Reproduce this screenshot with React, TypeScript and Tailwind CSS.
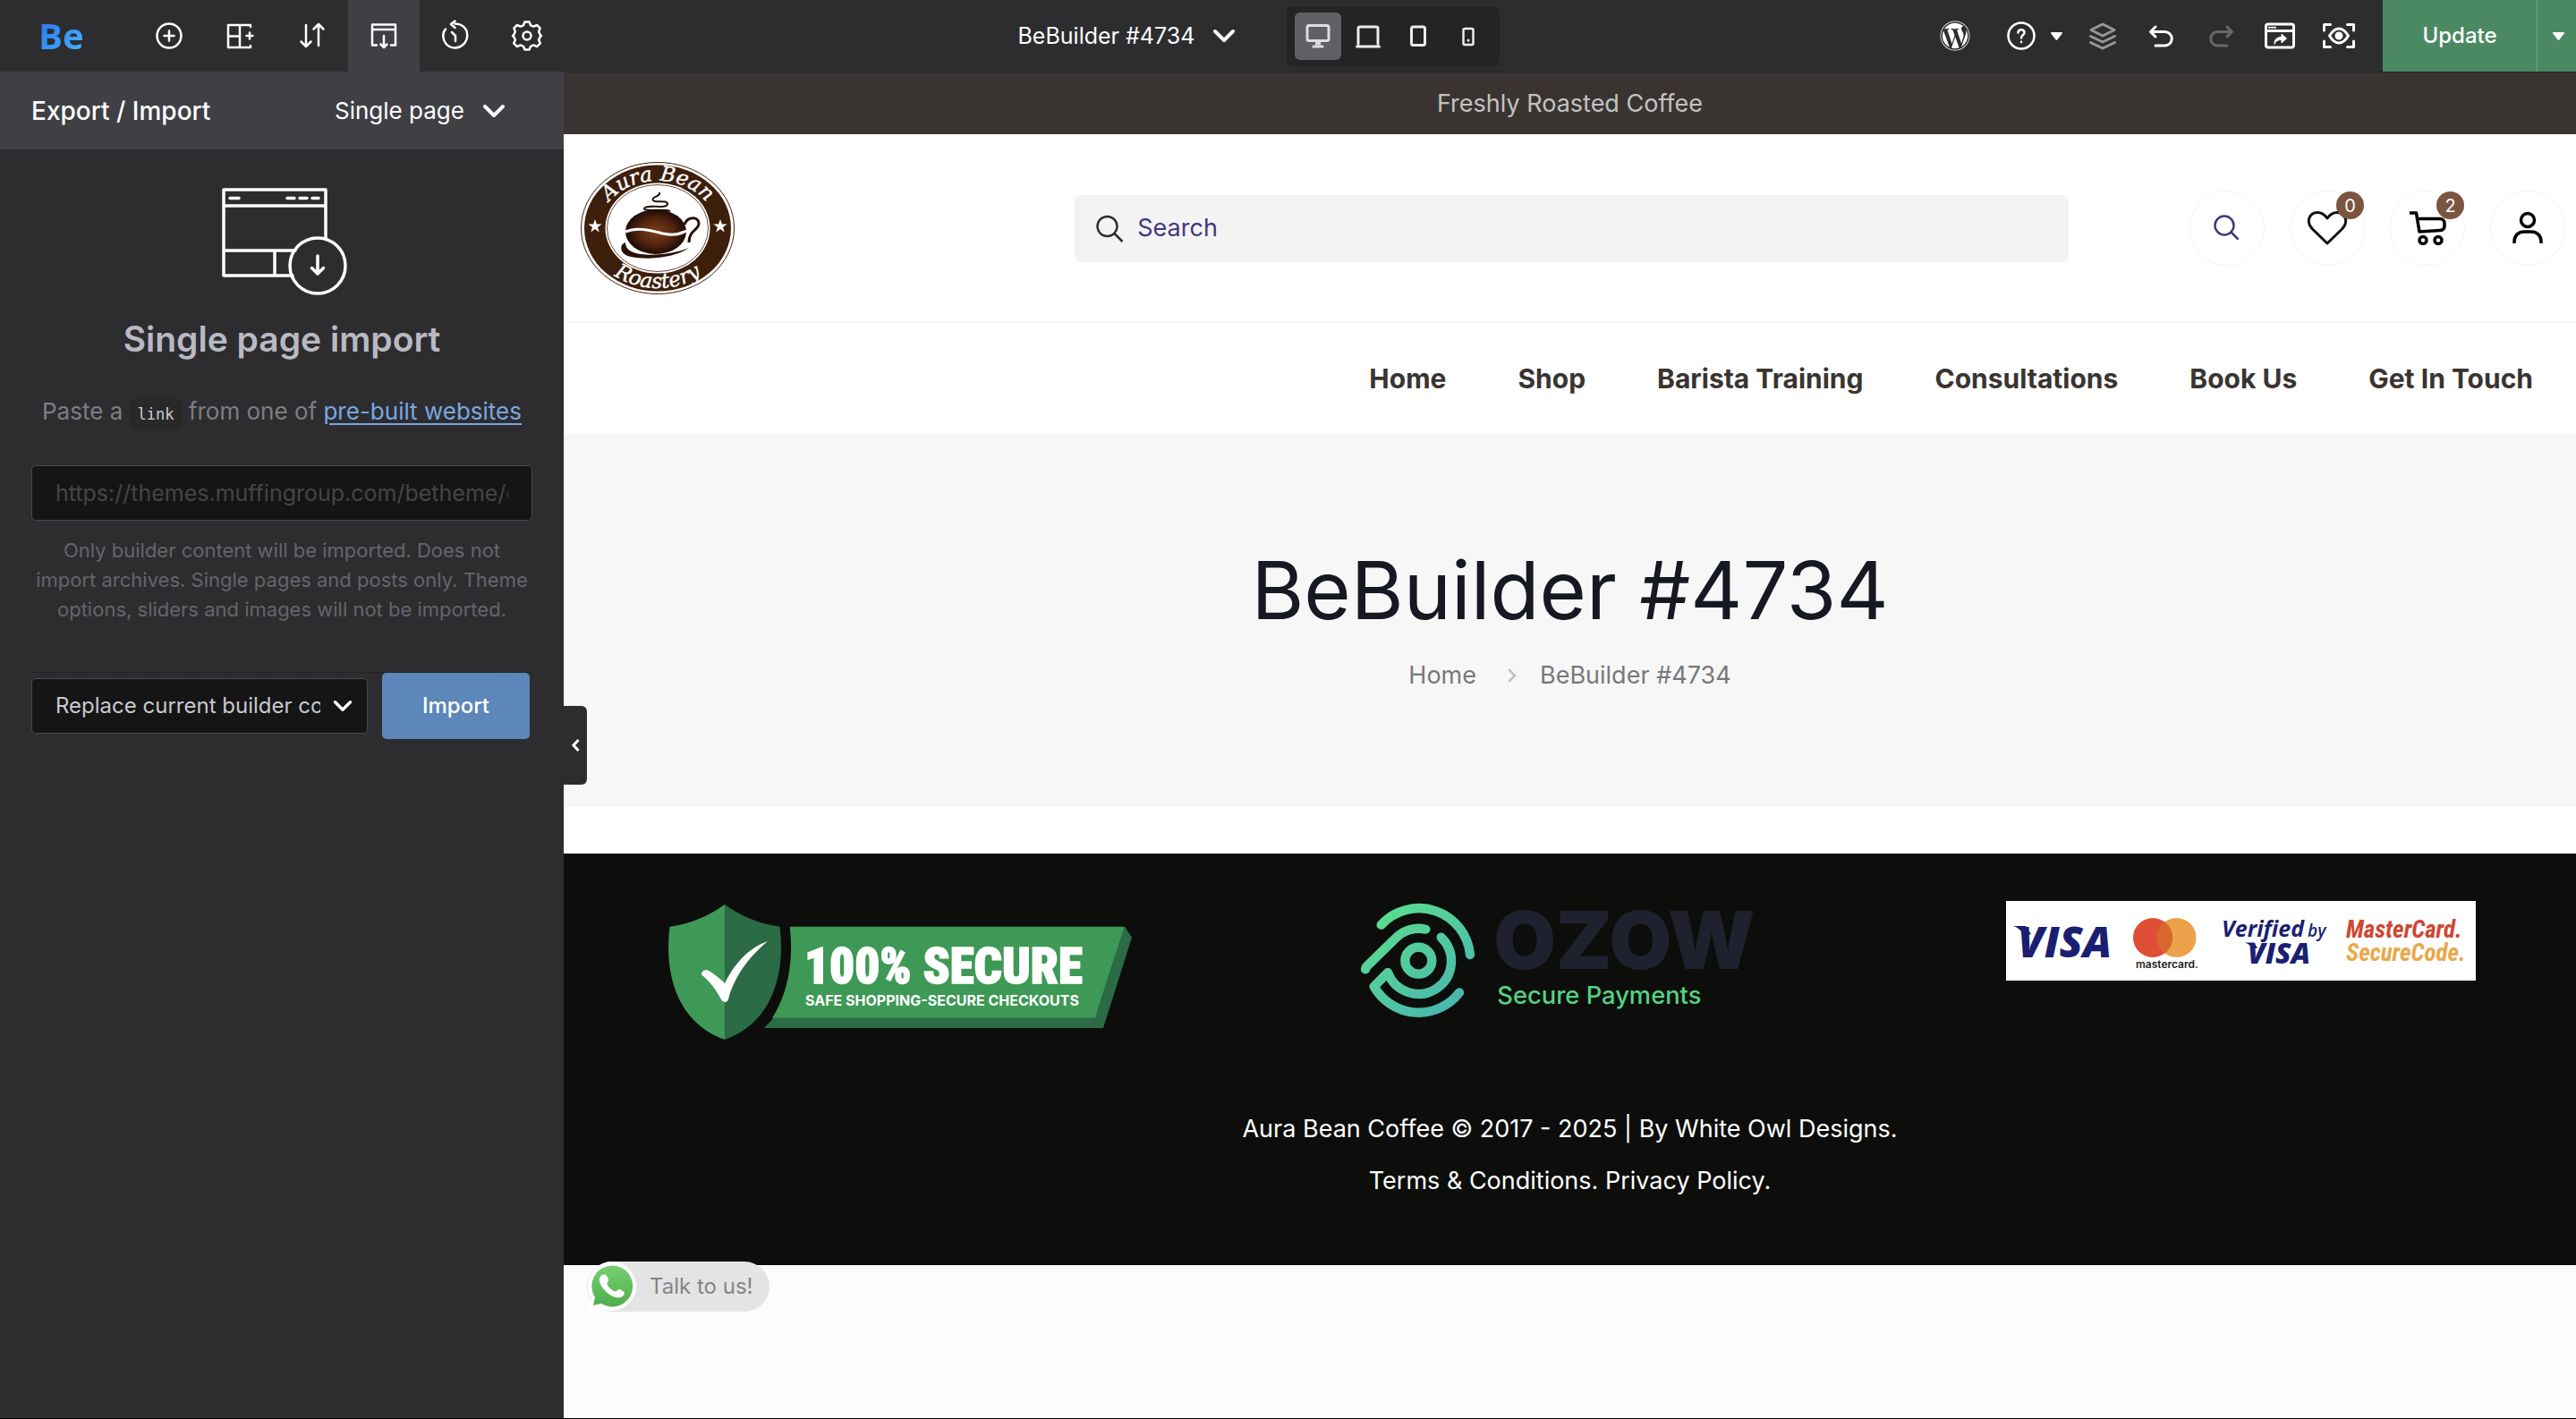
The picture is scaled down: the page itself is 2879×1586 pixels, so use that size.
import type { ReactNode } from 'react';
import { FaWordpress } from 'react-icons/fa';

const Chevron = ({ className = '' }: { className?: string }) => (
  <svg className={className} viewBox="0 0 26 16" fill="none" stroke="currentColor" strokeWidth="4" strokeLinecap="round" strokeLinejoin="round">
    <path d="M3 3l10 10L23 3" />
  </svg>
);

const Caret = () => (
  <svg className="w-[13px] h-[9px]" viewBox="0 0 13 9" fill="currentColor">
    <path d="M1 0h11c1 0 1.300.8.8 1.500L7.500 8.300c-.5.700-1.500.7-2 0L.2 1.500C-.3.800 0 0 1 0z" />
  </svg>
);

// 36px outlined icon used in the builder toolbar
const Icon = ({ children, width = 2.5 }: { children: ReactNode; width?: number }) => (
  <svg className="w-9 h-9" viewBox="0 0 36 36" fill="none" stroke="currentColor" strokeWidth={width} strokeLinecap="round" strokeLinejoin="round">
    {children}
  </svg>
);

const tools = [
  {
    label: 'Add element',
    icon: (
      <Icon>
        <circle cx="18" cy="18" r="13.500" />
        <path d="M18 12.500v11M12.500 18h11" />
      </Icon>
    ),
  },
  {
    label: 'Pre-built sections',
    icon: (
      <Icon>
        <path d="M29 6H4v25h25M17 6v25M4 18.500h13M29 6v2M29 29v2M28 14.500v7M24.500 18h7" />
      </Icon>
    ),
  },
  {
    label: 'Navigator order',
    icon: (
      <Icon>
        <path d="M11 6v24M5.500 24.500L11 30l5.500-5.500M25 29V5M19.500 10.500L25 5l5.500 5.500" />
      </Icon>
    ),
  },
  {
    label: 'Export / Import',
    active: true,
    icon: (
      <Icon>
        <path d="M10 28.500H5V5.500h26v23h-5M5 11h26M18 18v13M14.500 27.500L18 31l3.500-3.500" />
      </Icon>
    ),
  },
  {
    label: 'History',
    icon: (
      <Icon>
        <path d="M7 10.500C3 15 3.500 22 7.500 27c5 5.800 14 5.800 19.500.5 6-6 5.500-16-1-20.500-2.500-1.800-5-2.500-8.500-2.500M17.500 1.500L13 5l4.500 4M14 14l4 4v6" />
      </Icon>
    ),
  },
  {
    label: 'Settings',
    icon: (
      <Icon>
        <circle cx="18" cy="18" r="4.500" />
        <path d="M15.400 2.500h5.200l1.400 3.800 3.400 1.400 3.700-1.700 3.600 3.600-1.600 3.700 1.400 3.300 1.500 1.400-1.500 1.400-1.400 3.400 1.700 3.600-3.700 3.700-3.700-1.700-3.400 1.400-1.400 3.700h-5.200L14 29.800l-3.400-1.400-3.700 1.700-3.700-3.700 1.700-3.600-1.400-3.400L2 18l1.500-1.400 1.400-3.300-1.600-3.700L6.900 6l3.700 1.700L14 6.300z" />
      </Icon>
    ),
  },
];

const devices = [
  {
    label: 'Desktop',
    active: true,
    icon: (
      <Icon width={3}>
        <rect x="6" y="6.500" width="24" height="17" rx="2" />
        <path d="M13 30h10" />
        <path d="M18 24.500v4" strokeWidth="6" strokeLinecap="butt" />
      </Icon>
    ),
  },
  {
    label: 'Laptop',
    icon: (
      <Icon width={3}>
        <path d="M7 27V9.500C7 8.500 8 8 9 8h18c1 0 2 .5 2 1.500V27M5.500 30h25" />
      </Icon>
    ),
  },
  {
    label: 'Tablet',
    icon: (
      <Icon width={3}>
        <rect x="10.500" y="8" width="15" height="20.500" rx="2" />
      </Icon>
    ),
  },
  {
    label: 'Mobile',
    icon: (
      <Icon width={2.5}>
        <rect x="12.500" y="10" width="11" height="18" rx="1.500" />
        <circle cx="18" cy="23" r=".8" fill="currentColor" strokeWidth="1.500" />
      </Icon>
    ),
  },
];

const actions = [
  {
    label: 'Global sections',
    color: 'text-[#98989a]',
    icon: (
      <Icon width={3}>
        <path d="M18 5l13 6.500L18 18 5 11.500zM4.500 18.500L18 25l13.500-6.500M4.500 25.500L18 32l13.500-6.500" />
      </Icon>
    ),
  },
  {
    label: 'Undo',
    color: 'text-white',
    icon: (
      <Icon width={3}>
        <path d="M11 8l-5.500 5.500L11 19M6 13.500h15.500a7.500 7.500 0 0 1 0 15.500H11" />
      </Icon>
    ),
  },
  {
    label: 'Redo',
    color: 'text-[#69696b]',
    icon: (
      <Icon width={3}>
        <path d="M25 8l5.500 5.500L25 19M30 13.500H14.500a7.500 7.500 0 0 0 0 15.500H25" />
      </Icon>
    ),
  },
  {
    label: 'Preview in new tab',
    color: 'text-white',
    icon: (
      <Icon width={3}>
        <rect x="2.500" y="5" width="31" height="26" rx="2.500" />
        <path d="M3 12.500h30" />
        <path d="M6 8.700h1M9 8.700h1M12 8.700h1" strokeWidth="2" />
        <path d="M12 27c-.5-5 3-7.500 8-7.500v-3.500l5.500 5-5.500 5v-3.500c-4 0-6.500 1-8 4.500z" fill="currentColor" strokeWidth="1" />
      </Icon>
    ),
  },
  {
    label: 'Live preview',
    color: 'text-white',
    icon: (
      <Icon width={3}>
        <path d="M1.500 12V5.500h7M27.500 5.500h7V12M34.500 24v6.500h-7M8.500 30.500h-7V24" />
        <path d="M7.500 18c3-5 6.500-8 10.500-8s7.500 3 10.500 8c-3 5-6.500 8-10.500 8s-7.500-3-10.500-8z" />
        <circle cx="18" cy="18" r="3" fill="currentColor" />
      </Icon>
    ),
  },
];

const TopBar = () => (
  <header className="flex h-20 shrink-0 items-stretch justify-between bg-[#2d2d2f] text-white">
    <div className="flex w-[670px] shrink-0 items-stretch">
      <a href="#" aria-label="Be" className="flex w-[149px] items-center pl-[43px]">
        <span className="bg-gradient-to-br from-[#2a6ff0] to-[#4cb8ff] bg-clip-text font-['Open_Sans'] text-[40px] leading-[48px] font-bold text-transparent">Be</span>
      </a>
      {tools.map((tool) => (
        <button key={tool.label} aria-label={tool.label} className={tool.active ? 'flex w-20 items-center justify-center bg-[#403f44]' : 'flex w-20 items-center justify-center hover:bg-[#38383b]'}>
          {tool.icon}
        </button>
      ))}
    </div>

    <div className="flex items-center gap-[57px]">
      <div className="relative flex items-center">
        <select aria-label="Edited page" className="w-[243px] appearance-none bg-transparent text-[25px] leading-10 text-white">
          <option>BeBuilder #4734</option>
        </select>
        <Chevron className="pointer-events-none absolute right-0 h-4 w-[26px]" />
      </div>
      <div className="flex gap-1 rounded-md bg-[#242426] px-[9px] py-[7px]">
        {devices.map((device) => (
          <button key={device.label} aria-label={device.label} className={device.active ? 'flex h-[53px] w-[52px] items-center justify-center rounded-md bg-[#605f64] text-[#dddce1]' : 'flex h-[53px] w-[52px] items-center justify-center rounded-md text-[#ececef]'}>
            {device.icon}
          </button>
        ))}
      </div>
    </div>

    <div className="flex items-stretch">
      <button aria-label="WordPress" className="flex w-[84px] items-center justify-center">
        <FaWordpress className="h-[34px] w-[34px]" />
      </button>
      <button aria-label="Help" className="flex w-[90px] items-center gap-[15px] pl-[14px]">
        <Icon>
          <circle cx="18" cy="18" r="14.500" />
          <path d="M14.500 14.500c0-4.500 7-4.500 7 0 0 2.500-3.500 2.500-3.500 6M18 24.800v.2" />
        </Icon>
        <Caret />
      </button>
      {actions.map((action) => (
        <button key={action.label} aria-label={action.label} className={`flex w-[66px] items-center justify-center ${action.color}`}>
          {action.icon}
        </button>
      ))}
      <button className="ml-4 w-[172px] bg-[#4b8963] text-[24px] font-medium">Update</button>
      <button aria-label="More update options" className="flex w-[44px] items-center justify-center border-l border-[#6ea583] bg-[#4b8963] pl-1">
        <Caret />
      </button>
    </div>
  </header>
);

const Sidebar = () => (
  <aside className="relative w-[630px] shrink-0 bg-[#2d2d2f]">
    <div className="flex h-[88px] items-center justify-between border-b border-[#252527] bg-[#403f44] pr-[65px] pl-[35px] text-white">
      <h2 className="text-[28px] font-medium">Export / Import</h2>
      <div className="relative flex items-center">
        <select aria-label="Import type" className="w-[191px] appearance-none bg-transparent text-[26px] leading-10">
          <option>Single page</option>
        </select>
        <Chevron className="pointer-events-none absolute right-0 h-4 w-[26px]" />
      </div>
    </div>

    <div className="px-[35px] pt-[42px] text-center">
      <svg className="mx-auto h-[121px] w-[146px]" viewBox="-6 0 146 121" fill="none" stroke="#fff" strokeWidth="3.500" strokeLinecap="round" strokeLinejoin="round">
        <path d="M116 56V2H2v96h77M2 20h114M2 70h80M59 70v28" />
        <path d="M9 11.500h10M73 11.500h8M87 11.500h8M101 11.500h7" />
        <circle cx="107" cy="87" r="31" />
        <path d="M107 76v20M100.500 89.500L107 96l6.500-6.500" />
      </svg>
      <h3 className="mt-[18px] text-[39px] leading-[60px] font-semibold text-[#bab9c3]">Single page import</h3>
      <p className="mt-[31px] h-10 text-[26px] leading-10 whitespace-nowrap text-[#7f7d85]">
        Paste a <code className="rounded-md bg-[#29292a] px-[9px] py-2 font-['DejaVu_Sans_Mono',monospace] text-[17px] leading-none text-[#d0cfd6]">link</code> from one of{' '}
        <a href="#" className="text-[#7ba7e0] underline underline-offset-4">pre-built websites</a>
      </p>
      <input
        aria-label="Page link"
        placeholder="https://themes.muffingroup.com/betheme/demo"
        className="mt-10 block h-[62px] w-full rounded-[5px] border border-[#48484c] bg-[#151515] px-[26px] text-[25px] placeholder:text-[#454547]"
      />
      <p className="mt-[17px] text-[22px] leading-[33px] text-[#66646c]">
        Only builder content will be imported. Does not
        <br />
        import archives. Single pages and posts only. Theme
        <br />
        options, sliders and images will not be imported.
      </p>
      <div className="mt-[53px] flex items-center gap-4 border-t border-dashed border-[#1e1e20]">
        <div className="relative flex w-[376px] items-center">
          <select aria-label="Import mode" className="h-[62px] w-full appearance-none rounded-[5px] border border-[#48484c] bg-[#151515] pr-[52px] pl-[26px] text-[24px] text-[#c9c8d0]">
            <option>Replace current builder content</option>
          </select>
          <Chevron className="pointer-events-none absolute right-[17px] h-[14px] w-[22px] text-white" />
        </div>
        <button className="h-[74px] w-[165px] rounded-[5px] bg-[#5d87b9] text-[24px] font-medium text-white">Import</button>
      </div>
    </div>

    <button aria-label="Collapse sidebar" className="absolute top-[709px] -right-[26px] z-10 flex h-[88px] w-[26px] items-center justify-center rounded-r-md bg-[#2d2d2f] text-white">
      <svg className="h-4 w-3" viewBox="0 0 12 16" fill="none" stroke="currentColor" strokeWidth="3">
        <path d="M9.500 2L4 8l5.500 6" />
      </svg>
    </button>
  </aside>
);

const RoasteryLogo = () => (
  <svg className="h-[150px] w-[178px]" viewBox="-89 -75 178 150" role="img" aria-label="Aura Bean Roastery">
    <defs>
      <radialGradient id="bean">
        <stop offset="0" stopColor="#7d3d1a" />
        <stop offset=".55" stopColor="#552610" />
        <stop offset="1" stopColor="#1e0b04" />
      </radialGradient>
      <path id="arcTop" d="M-65 0A65 53 0 0 1 65 0" />
      <path id="arcBottom" d="M-79 0A79 67 0 0 0 79 0" />
    </defs>
    <ellipse rx="85.500" ry="73.500" fill="#fff" stroke="#3d1f0c" strokeWidth="1" />
    <ellipse rx="82" ry="70.500" fill="#3d1f0c" />
    <ellipse rx="58.500" ry="50.500" fill="#fff" />
    <ellipse rx="56.500" ry="48.500" fill="none" stroke="#3d1f0c" strokeWidth=".8" />
    <g fill="#fff" stroke="#fff" strokeWidth=".4" fontFamily="DejaVu Serif" fontSize="23" fontStyle="italic" textAnchor="middle">
      <text><textPath href="#arcTop" startOffset="50%">Aura Bean</textPath></text>
      <text><textPath href="#arcBottom" startOffset="50%">Roastery</textPath></text>
    </g>
    <path id="star" fill="#fff" d="M-70-10l1.900 5.500h5.700l-4.600 3.400 1.700 5.500-4.700-3.300-4.700 3.300 1.700-5.500-4.600-3.400h5.700z" />
    <use href="#star" x="140" />
    <ellipse cx="-2" cy="4" rx="34" ry="25" fill="url(#bean)" />
    <path d="M-36 4c14-6 30-1 42 2 9 2 19 1 26-3" fill="none" stroke="#fff" strokeWidth="3" />
    <path d="M30-4c3-9 16-10 16-1 0 7-11 7-11 21" fill="none" stroke="#2a1006" strokeWidth="3" />
    <path d="M-36 16c-8 3-6 14 6 16 20 4 50 1 65-10-18 8-50 10-62 5-6-2-9-6-9-11z" fill="#2a1006" />
    <path d="M2-40c2 5-10 5-7 9 3 3 16-1 16 4 0 6-24 0-26 5-1 4 22 0 29 3" fill="none" stroke="#24120c" strokeWidth="2" />
  </svg>
);

const circleButton = 'relative flex h-[84px] w-[84px] items-center justify-center rounded-full border border-[#f8f4ee]';
const badge = 'absolute top-0 right-0 flex h-[31px] w-[31px] items-center justify-center rounded-full bg-[#7b5540] text-[20px] text-white';

const ShopHeader = () => (
  <div className="grid h-[211px] grid-cols-[1fr_2fr_1fr] items-center border-b border-[#f6f2ea] pr-3 pl-4">
    <a href="#"><RoasteryLogo /></a>
    <label className="flex h-[75px] items-center gap-[15px] rounded-lg bg-[#f3f3f3] pl-6">
      <svg className="h-[31px] w-[31px] shrink-0" viewBox="0 0 31 31" fill="none" stroke="#2e2e2e" strokeWidth="2.500">
        <circle cx="12.500" cy="13" r="11" />
        <path d="M20.500 21l9 9" />
      </svg>
      <input type="search" aria-label="Search" placeholder="Search" className="w-full bg-transparent text-[27px] outline-none placeholder:text-[#45367f]" />
    </label>
    <div className="flex justify-end gap-7">
      <button aria-label="Search" className={circleButton}>
        <svg className="h-8 w-8" viewBox="0 0 32 32" fill="none" stroke="#45367f" strokeWidth="2.500">
          <circle cx="13" cy="13" r="10.500" />
          <path d="M20.500 20.500l8 8" />
        </svg>
      </button>
      <button aria-label="Wishlist" className={circleButton}>
        <svg className="h-10 w-12" viewBox="0 0 48 40" fill="none" stroke="#111" strokeWidth="3" strokeLinejoin="round">
          <path d="M24 37L7.500 21C-1 12 5 2.500 13 2.500c5 0 8.500 3 11 6.500 2.500-3.500 6-6.500 11-6.500C43 2.500 49 12 40.500 21z" />
        </svg>
        <span className={badge}>0</span>
      </button>
      <button aria-label="Cart" className={circleButton}>
        <svg className="h-11 w-11" viewBox="-22 -22 44 44" fill="none" stroke="#000" strokeWidth="3.500" strokeLinejoin="round">
          <path d="M-20-17h7.500l1 6.500L-9 4l23-1.500c3-.2 5-2 5-5v-3c0-3-2-5-5-5h-25.500" />
          <circle cx="-5" cy="13.500" r="4" />
          <circle cx="12" cy="13.500" r="4" />
        </svg>
        <span className={badge}>2</span>
      </button>
      <button aria-label="Account" className={circleButton}>
        <svg className="h-10 w-10" viewBox="-20 -20 40 40" fill="none" stroke="#000" strokeWidth="3.500">
          <circle cy="-9" r="7.500" />
          <path d="M-15 17v-2C-15 8-10 4-4 4h8c6 0 11 4 11 11v2" />
        </svg>
      </button>
    </div>
  </div>
);

const SecureBadge = () => (
  <svg className="h-[160px] w-[525px]" viewBox="0 0 525 160" role="img" aria-label="100% Secure">
    <path d="M68 4C50 17 28 26 6.500 28.700 0 80 14 136 68 155z" fill="#3d9955" />
    <path d="M68 4c18 13 40 22 61.500 24.700C136 80 122 136 68 155z" fill="#2b6b45" />
    <path d="M515 28.700l8 12L491 142H112l12-13 360-4z" fill="#2b6b45" />
    <path d="M140.600 28.700H515L482 130.700H121c15-22 25-60 19.600-102z" fill="#3d9955" />
    <path d="M42 81c1-4 6-5 10-2 6 4 12 9 16 13 10-20 25-39 48-47-22 18-38 41-44 65-1 4-6 4-8 0-6-11-12-19-20-26-2-1-2-2-2-3z" fill="#fff" />
    <text x="157" y="92" fill="#fff" stroke="#fff" strokeWidth="1.500" fontFamily="Roboto Condensed, Roboto" fontSize="55" fontWeight="900">100% SECURE</text>
    <text x="158" y="117" fill="#fff" fontFamily="Inter" fontSize="16" fontWeight="700">SAFE SHOPPING-SECURE CHECKOUTS</text>
  </svg>
);

const OzowLogo = () => (
  <svg className="h-[135px] w-[525px] overflow-visible" viewBox="36 81 1575 405" role="img" aria-label="Ozow Secure Payments">
    <defs>
      <linearGradient id="ozow" gradientUnits="userSpaceOnUse" x1="180" y1="130" x2="430" y2="430">
        <stop offset="0" stopColor="#5bdc8f" />
        <stop offset="1" stopColor="#49b8ad" />
      </linearGradient>
    </defs>
    <g fill="none" stroke="url(#ozow)" strokeWidth="31" strokeLinecap="round" strokeLinejoin="round">
      <path d="M191 161A172 172 0 0 1 489 261" />
      <path d="M340 176A108 108 0 0 0 240 205L143 300Q139 304 138 310" />
      <path d="M392 203A110 110 0 1 1 213 321L167 368A172 172 0 0 0 453 388" />
      <circle cx="316" cy="281" r="45" />
    </g>
    <text x="568" y="310" fill="#1f222e" fontFamily="Inter" fontSize="270" fontWeight="900">OZOW</text>
    <text x="580" y="427" fill="#55d184" fontFamily="Inter" fontSize="82" fontWeight="500">Secure Payments</text>
  </svg>
);

const CardLogos = () => (
  <svg className="h-[89px] w-[525px] bg-white" viewBox="0 0 525 89" role="img" aria-label="Visa and Mastercard">
    <g fontStyle="italic" fill="#1b1f71">
      <path d="M8 28h14l6 9-8 2c-2-5-6-9-12-11z" />
      <text x="13" y="63" fontFamily="Open Sans" fontSize="48" fontWeight="800">VISA</text>
      <text x="241" y="40" fontFamily="Open Sans" fontSize="25" fontWeight="700">Verified</text>
      <text x="337" y="40" fontFamily="Open Sans" fontSize="19" fontWeight="600">by</text>
      <path d="M267 46.500h10l4 6-6 1.500c-1-4-4-6-8-7.500z" />
      <text x="270" y="70" fontFamily="Open Sans" fontSize="32" fontWeight="800">VISA</text>
    </g>
    <circle cx="190.500" cy="41" r="22" fill="#eba24a" />
    <circle cx="164" cy="41" r="22" fill="#df4f36" />
    <path d="M177.200 23.500a22 22 0 0 1 0 35 22 22 0 0 1 0-35z" fill="#d9682f" />
    <text x="145" y="75" fill="#222" fontFamily="Inter" fontSize="12" fontWeight="600">mastercard.</text>
    <g fontFamily="Roboto Condensed, Roboto" fontSize="27" fontStyle="italic" fontWeight="700">
      <text x="380" y="41" fill="#cf4633">MasterCard.</text>
      <text x="380" y="67" fill="#e8a94a">SecureCode.</text>
    </g>
  </svg>
);

const menu = ['Home', 'Shop', 'Barista Training', 'Consultations', 'Book Us', 'Get In Touch'];

const SitePreview = () => (
  <main className="relative min-w-0 flex-1 bg-[#fcfcfc]">
    <div className="border-t border-[#252529] bg-[#393431] text-center text-[27px] leading-[69px] text-[#c4c2c1]">Freshly Roasted Coffee</div>

    <div className="bg-white">
      <ShopHeader />
      <nav className="flex h-[124px] items-center justify-end gap-20 pr-12 text-[30px] font-bold text-[#393431]">
        {menu.map((item) => (
          <a key={item} href="#">{item}</a>
        ))}
      </nav>
    </div>

    <section className="bg-[#f7f7f7] pt-[120px] pb-[127px] text-center">
      <h1 className="text-[90px] leading-[110px] text-[#161922]">BeBuilder #4734</h1>
      <div className="mt-5 flex items-center justify-center text-[27px] leading-10 text-[#77787c]">
        <a href="#">Home</a>
        <svg className="mr-[26px] ml-[35px] h-4 w-[10px]" viewBox="0 0 10 16" fill="none" stroke="#c0c0c0" strokeWidth="2.500" strokeLinecap="round">
          <path d="M2 2l6 6-6 6" />
        </svg>
        <span>BeBuilder #4734</span>
      </div>
    </section>
    <div className="h-[52px] bg-white" />

    <footer className="bg-[#0d0e0b] pt-[53px] pb-[65px] text-white">
      <div className="grid grid-cols-3 items-start justify-items-center">
        <SecureBadge />
        <OzowLogo />
        <CardLogos />
      </div>
      <div className="mt-[66px] text-center text-[27px] leading-[58px]">
        <p>Aura Bean Coffee © 2017 - 2025 | By White Owl Designs.</p>
        <p><a href="#">Terms &amp; Conditions.</a> <a href="#">Privacy Policy.</a></p>
      </div>
    </footer>

    {/* WhatsApp chat bubble */}
    <a href="#" className="absolute bottom-[119px] left-[26px] flex h-14 w-[204px] items-center gap-[14px] rounded-full bg-[#e4e4e4] text-[24px] text-[#848484]">
      <svg className="h-14 w-14 shrink-0" viewBox="0 0 56 56">
        <defs>
          <linearGradient id="wa" x1="0" y1="0" x2="0" y2="1">
            <stop offset="0" stopColor="#78cf72" />
            <stop offset="1" stopColor="#4fae4e" />
          </linearGradient>
        </defs>
        <path d="M28 0a27.500 27.500 0 1 1-13 52L0 56l5-14A27.500 27.500 0 0 1 28 0z" fill="#fff" />
        <path d="M28 4.500a23 23 0 1 1-12 42.500L7 49l2-9A23 23 0 0 1 28 4.500z" fill="url(#wa)" />
        <path d="M15 17c2-3 6-3 7-1l2 4c.5 2-2 4-1.500 5.500 2 4 5 6.500 9 8 2 .5 3-3 5-2.500l4.500 2.500c2 1.500 0 5-2 6-3 1.500-7 1-11-1C20 34 15 27 14 22c-.3-2 0-4 1-5z" fill="#fff" />
      </svg>
      <span>Talk to us!</span>
    </a>
  </main>
);

const App = () => {
  return (
    <div className="flex min-h-screen flex-col border-b border-black bg-[#2d2d2f] font-['Inter',sans-serif]">
      <TopBar />
      <div className="flex flex-1 items-stretch">
        <Sidebar />
        <SitePreview />
      </div>
    </div>
  );
};

export default App;
